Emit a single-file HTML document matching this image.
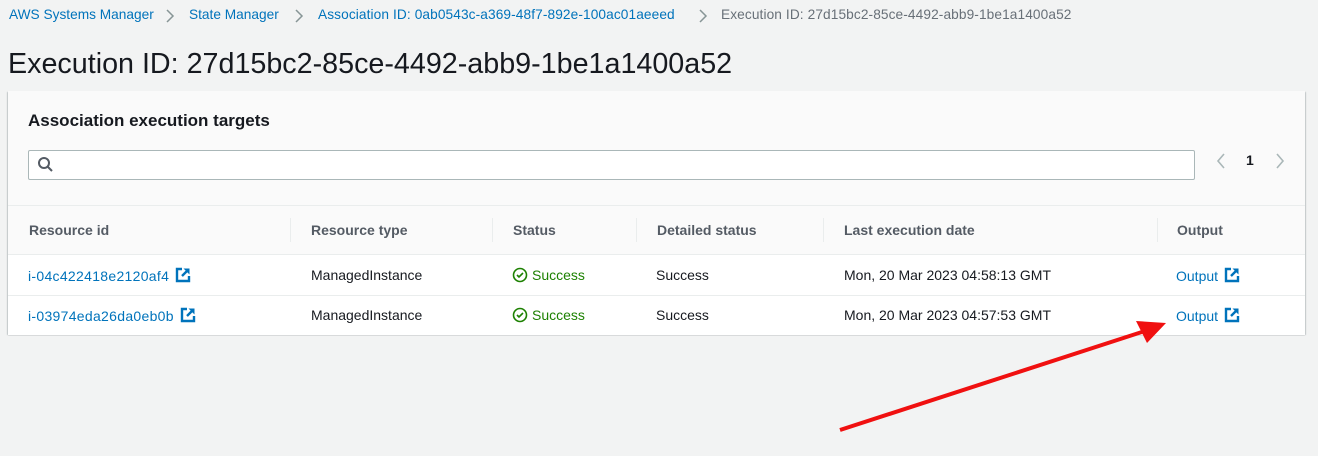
<!DOCTYPE html>
<html><head><style>
body{margin:0;width:1318px;height:456px;background:#f2f3f3;font-family:"Liberation Sans",sans-serif;position:relative;overflow:hidden;color:#16191f}
.a{position:absolute;white-space:nowrap}
.bc{top:7px;font-size:13.7px;color:#0073bb}
.panel{position:absolute;left:8px;top:91px;width:1297px;height:243px;background:#fafafa;box-shadow:0 1px 1px 0 rgba(0,28,36,.3),1px 1px 1px 0 rgba(0,28,36,.15),-1px 1px 1px 0 rgba(0,28,36,.15)}
.rows{position:absolute;left:0;top:163px;width:1297px;height:80px;background:#fff;border-top:1px solid #eaeded}
.row2{position:absolute;left:0;top:40px;width:1297px;border-top:1px solid #eaeded}
.th{top:131px;font-size:14px;font-weight:bold;color:#545b64}
.div{position:absolute;top:127px;width:1px;height:24px;background:#eaeded}
.td{font-size:14px}
.lk{color:#0073bb}
.ok{color:#1d8102}
.ic{display:inline-block;vertical-align:-2px;margin-left:6px}
</style></head><body>
<div class="a bc" style="left:9px">AWS Systems Manager</div>
<svg class="a" style="left:165px;top:9px" width="10" height="14"><path d="M2 1l6 6-6 6" stroke="#879596" stroke-width="1.5" fill="none"/></svg>
<div class="a bc" style="left:189px">State Manager</div>
<svg class="a" style="left:294px;top:9px" width="10" height="14"><path d="M2 1l6 6-6 6" stroke="#879596" stroke-width="1.5" fill="none"/></svg>
<div class="a bc" style="left:318px;letter-spacing:0.1px">Association ID: 0ab0543c-a369-48f7-892e-100ac01aeeed</div>
<svg class="a" style="left:698px;top:9px" width="10" height="14"><path d="M2 1l6 6-6 6" stroke="#879596" stroke-width="1.5" fill="none"/></svg>
<div class="a bc" style="left:721px;color:#687078;letter-spacing:0.1px">Execution ID: 27d15bc2-85ce-4492-abb9-1be1a1400a52</div>
<div class="a" style="left:8px;top:48px;font-size:28.7px;color:#16191f">Execution ID: 27d15bc2-85ce-4492-abb9-1be1a1400a52</div>
<div class="panel">
 <div class="a" style="left:20px;top:20px;font-size:17px;font-weight:bold">Association execution targets</div>
 <div class="a" style="left:20px;top:59px;width:1165px;height:28px;background:#fff;border:1px solid #aab7b8;border-radius:2px"></div>
 <svg class="a" style="left:29px;top:65px" width="18" height="18"><circle cx="7" cy="7" r="5" stroke="#545b64" stroke-width="2" fill="none"/><path d="M11 11l4 4" stroke="#545b64" stroke-width="2"/></svg>
 <svg class="a" style="left:1207px;top:61px" width="12" height="18"><path d="M9 2L3 9l6 7" stroke="#aab7b8" stroke-width="1.6" fill="none"/></svg>
 <div class="a" style="left:1238px;top:61px;font-size:14px;font-weight:bold">1</div>
 <svg class="a" style="left:1266px;top:61px" width="12" height="18"><path d="M3 2l6 7-6 7" stroke="#aab7b8" stroke-width="1.6" fill="none"/></svg>
 <div class="a" style="left:0;top:114px;width:1297px;border-top:1px solid #eaeded"></div>
 <div class="a th" style="left:21px">Resource id</div>
 <div class="div" style="left:282px"></div>
 <div class="a th" style="left:303px">Resource type</div>
 <div class="div" style="left:484px"></div>
 <div class="a th" style="left:505px">Status</div>
 <div class="div" style="left:628px"></div>
 <div class="a th" style="left:649px">Detailed status</div>
 <div class="div" style="left:815px"></div>
 <div class="a th" style="left:836px">Last execution date</div>
 <div class="div" style="left:1149px"></div>
 <div class="a th" style="left:1169px">Output</div>
 <div class="rows"><div class="row2"></div></div>
</div>
<svg width="0" height="0" style="position:absolute"><defs>
<symbol id="ext" viewBox="0 0 16 16"><path d="M7 2H2v12h12V9" stroke="#0073bb" stroke-width="2.4" fill="none"/><path d="M8.5 1.5h6v6z" fill="#0073bb"/><path d="M13 3L7 9" stroke="#0073bb" stroke-width="2.4"/></symbol>
<symbol id="chk" viewBox="0 0 16 16"><circle cx="8" cy="8" r="6.5" stroke="#1d8102" stroke-width="1.6" fill="none"/><path d="M5 8l2 2 4-4" stroke="#1d8102" stroke-width="1.6" fill="none"/></symbol>
</defs></svg>
<div class="a td lk" style="left:28px;top:267px;letter-spacing:0.3px">i-04c422418e2120af4<svg class="ic" width="16" height="16"><use href="#ext"/></svg></div>
<div class="a td" style="left:311px;top:267px">ManagedInstance</div>
<svg class="a" style="left:512px;top:267px" width="16" height="16"><use href="#chk"/></svg>
<div class="a td ok" style="left:532px;top:267px">Success</div>
<div class="a td" style="left:656px;top:267px">Success</div>
<div class="a td" style="left:844px;top:267px">Mon, 20 Mar 2023 04:58:13 GMT</div>
<div class="a td lk" style="left:1176px;top:267px">Output<svg class="ic" width="16" height="16"><use href="#ext"/></svg></div>
<div class="a td lk" style="left:28px;top:307px;letter-spacing:0.3px">i-03974eda26da0eb0b<svg class="ic" width="16" height="16"><use href="#ext"/></svg></div>
<div class="a td" style="left:311px;top:307px">ManagedInstance</div>
<svg class="a" style="left:512px;top:307px" width="16" height="16"><use href="#chk"/></svg>
<div class="a td ok" style="left:532px;top:307px">Success</div>
<div class="a td" style="left:656px;top:307px">Success</div>
<div class="a td" style="left:844px;top:307px">Mon, 20 Mar 2023 04:57:53 GMT</div>
<div class="a td lk" style="left:1176px;top:307px">Output<svg class="ic" width="16" height="16"><use href="#ext"/></svg></div>
<svg class="a" style="left:0;top:0" width="1318" height="456"><path d="M840 430L1145 331" stroke="#f01010" stroke-width="4"/><path d="M1166 323L1136 321L1147 343Z" fill="#f01010"/></svg>
</body></html>
